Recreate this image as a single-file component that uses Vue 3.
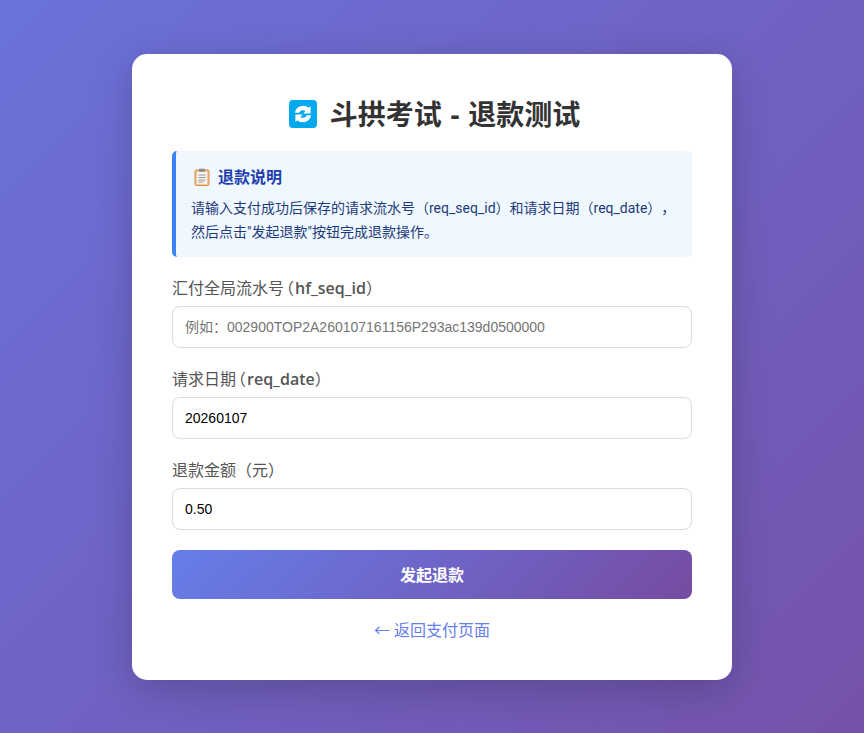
<template>
  <div class="page">
    <main class="card">
      <h1 class="title">
        <svg class="title-icon" viewBox="0 0 28 28" aria-hidden="true">
          <rect width="28" height="28" rx="4" fill="#03a9ec" />
          <path d="M6 12.8a8.2 8.2 0 0 1 13.6-5l2-1.8v7.4h-7.4l2.3-2.3a4 4 0 0 0-6.3 1.7z" fill="#fff" />
          <path d="M22 15.2a8.2 8.2 0 0 1-13.6 5l-2 1.8v-7.4h7.4l-2.3 2.3a4 4 0 0 0 6.3-1.7z" fill="#fff" />
        </svg>
        <span>斗拱考试 - 退款测试</span>
      </h1>

      <section class="notice">
        <h3 class="notice-title">
          <svg class="notice-icon" viewBox="0 0 16 18" aria-hidden="true">
            <rect x="1" y="2" width="14" height="15.5" rx="1" fill="#f4c9a0" stroke="#d9883f" />
            <rect x="3" y="4" width="10" height="12" fill="#f5f3ee" />
            <rect x="5" y="0.8" width="6" height="3" rx="0.6" fill="#8d8d8d" />
            <path d="M4.5 7h7M4.5 9.5h7M4.5 12h7M4.5 14h5" stroke="#9a9a9a" stroke-width="1" />
          </svg>
          退款说明
        </h3>
        <p class="notice-text">请输入支付成功后保存的请求流水号（req_seq_id）和请求日期（req_date），<br />然后点击"发起退款"按钮完成退款操作。</p>
      </section>

      <form class="form" @submit.prevent>
        <div v-for="f in fields" :key="f.label" class="field">
          <label class="field-label">{{ f.label }}<template v-if="f.code"><span class="paren">（</span><b>{{ f.code }}</b>）</template></label>
          <input class="field-input" type="text" :placeholder="f.placeholder" :value="f.value" />
        </div>
        <button class="submit" type="submit">发起退款</button>
      </form>

      <a class="back" href="#">← 返回支付页面</a>
    </main>
  </div>
</template>

<script setup>
const fields = [
  { label: '汇付全局流水号', code: 'hf_seq_id', placeholder: '例如：002900TOP2A260107161156P293ac139d0500000', value: '' },
  { label: '请求日期', code: 'req_date', placeholder: '', value: '20260107' },
  { label: '退款金额（元）', code: '', placeholder: '', value: '0.50' },
]
</script>

<style>
html, body {
  margin: 0;
  padding: 0;
}
</style>

<style scoped>
.page {
  box-sizing: border-box;
  height: 733px;
  display: flex;
  align-items: center;
  justify-content: center;
  overflow: hidden;
  background: linear-gradient(135deg, #6a72da 0%, #7552ab 100%);
  font-family: "Open Sans", "Noto Sans CJK SC", sans-serif;
  text-spacing-trim: space-all;
}

.card {
  box-sizing: border-box;
  width: 600px;
  height: 626px;
  padding: 40px;
  background: #fff;
  border-radius: 15px;
  box-shadow: 0 10px 40px rgba(0, 0, 0, .2);
}

.title {
  display: flex;
  align-items: center;
  justify-content: center;
  gap: 13px;
  margin: 0 0 20px;
  height: 35px;
  padding: 2px 0 0 5px;
  font-size: 28px;
  font-weight: 700;
  word-spacing: 1.5px;
  color: #333;
}

.title-icon {
  width: 28px;
  height: 28px;
  margin-top: 2px;
}

.notice {
  box-sizing: border-box;
  height: 106px;
  padding: 15px;
  background: #f0f8ff;
  border-left: 4px solid #3b82f6;
  border-radius: 5px;
}

.notice-title {
  display: flex;
  align-items: center;
  gap: 8px;
  margin: 0 0 8px 3px;
  font-size: 16px;
  line-height: 22px;
  font-weight: 700;
  color: #1e40af;
}

.notice-icon {
  width: 16px;
  height: 18px;
}

.notice-text {
  margin: 0;
  font-family: Roboto, "Noto Sans CJK SC", sans-serif;
  font-size: 14px;
  line-height: 24px;
  white-space: nowrap;
  color: #1e3a7a;
}

.form {
  margin-top: 20px;
}

.field {
  margin-bottom: 20px;
}

.field-label {
  display: block;
  margin-bottom: 8px;
  padding-top: 1px;
  font-size: 16px;
  line-height: 20px;
  font-weight: 400;
  color: #555;
}

.paren {
  font-feature-settings: "halt";
  margin: 0 1px 0 2px;
}

.field-label b {
  font-weight: 600;
  font-family: "Open Sans", sans-serif;
}

.field-input {
  box-sizing: border-box;
  display: block;
  width: 100%;
  height: 42px;
  padding: 12px;
  border: 1px solid #ddd;
  border-radius: 8px;
  font-family: "Liberation Sans", "Noto Sans CJK SC", sans-serif;
  font-size: 14px;
  color: #000;
  outline: none;
}

.field-input::placeholder {
  color: #757575;
}

.submit {
  display: block;
  width: 100%;
  height: 49px;
  border: 0;
  border-radius: 8px;
  background: linear-gradient(135deg, #667eea 0%, #764ba2 100%);
  color: #fff;
  font-family: inherit;
  font-size: 16px;
  font-weight: 700;
}

.back {
  display: block;
  margin-top: 20px;
  text-align: center;
  font-size: 16px;
  line-height: 22px;
  color: #667eea;
  text-decoration: none;
}
</style>
